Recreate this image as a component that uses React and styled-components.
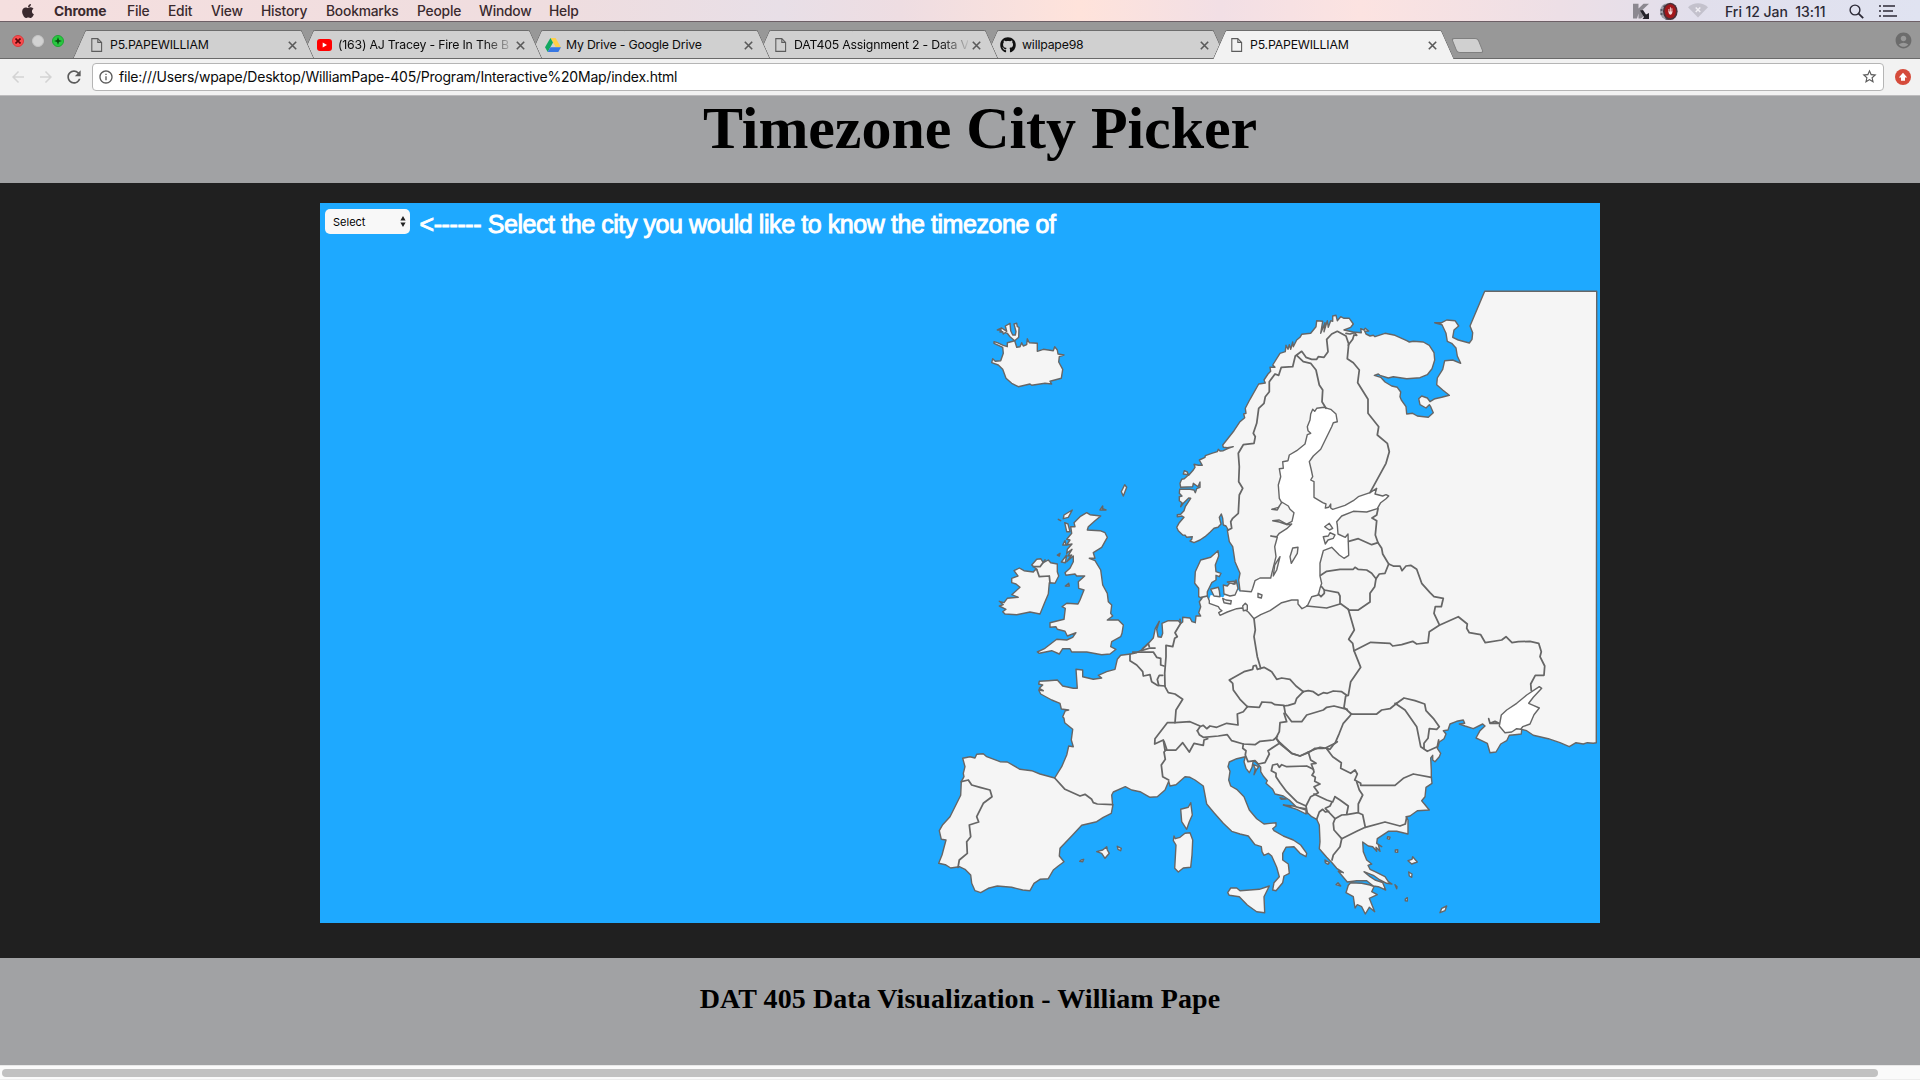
import React from "react";
import styled, { createGlobalStyle } from "styled-components";
import { FaApple, FaGithub } from "react-icons/fa";
import {
  MdAccountCircle,
  MdArrowBack,
  MdArrowForward,
  MdInfoOutline,
  MdRefresh,
  MdStarBorder,
} from "react-icons/md";

const GlobalStyle = createGlobalStyle`
  * { box-sizing: border-box; }
  html, body { margin: 0; padding: 0; overflow: hidden; }
  svg { display: block; flex: none; }
`;

const Screen = styled.div`
  width: 1920px;
  height: 1080px;
  display: flex;
  flex-direction: column;
  overflow: hidden;
  background: #a1a2a4;
  font-family: Inter, Roboto, "Liberation Sans", sans-serif;
`;

/* ---------- menu bar ---------- */

const MenuBar = styled.header`
  height: 22px;
  flex: none;
  display: flex;
  align-items: center;
  justify-content: space-between;
  padding: 1px 23px 0 20px;
  border-bottom: 1px solid #6d5f66;
  background: linear-gradient(90deg, #f5dfdf 0, #efdddf 560px, #e8dfe7 780px, #eedde2 900px,
    #ffe3db 1080px, #f2dfe5 1220px, #fce3e1 1360px, #eddfe6 1560px, #e1dfec 1700px, #e0e3f1 1920px);
  color: #3a2a2e;
`;

const MenuGroup = styled.nav`
  display: flex;
  align-items: center;
`;

const MenuItem = styled.span`
  width: ${(p) => p.$w}px;
  font-size: 13.8px;
  line-height: 21px;
  font-weight: ${(p) => (p.$bold ? 700 : 500)};
  letter-spacing: -0.2px;
  white-space: nowrap;
`;

const StatusGroup = styled.div`
  display: flex;
  align-items: center;
  color: #2c2a36;
`;

const Clock = styled.span`
  width: 125px;
  margin-left: 16px;
  padding-left: 1px;
  font-size: 14px;
  line-height: 21px;
  font-weight: 500;
  letter-spacing: -0.05px;
  white-space: pre;
`;

const StatusGap = styled.span`
  width: 15px;
`;

/* ---------- tab strip ---------- */

const TabStrip = styled.div`
  height: 37px;
  flex: none;
  display: flex;
  align-items: flex-end;
  padding-left: 14px;
  background: #989898;
  border-bottom: 1px solid #6a6a6a;
`;

const Lights = styled.div`
  display: flex;
  align-items: center;
  gap: 8px;
  height: 36px;
  width: 58.5px;
  padding-top: 1px;
  margin-left: -2px;
  margin-right: 2px;
`;

const Light = styled.span`
  width: 12px;
  height: 12px;
  border-radius: 50%;
  display: grid;
  place-items: center;
  background: ${(p) => p.$bg};
  border: 0.5px solid ${(p) => p.$edge};
`;

const TabBox = styled.div`
  position: relative;
  z-index: ${(p) => p.$z};
  width: 241.5px;
  height: ${(p) => (p.$active ? 29 : 28)}px;
  margin-right: -13.5px;
  margin-bottom: ${(p) => (p.$active ? -1 : 0)}px;
  padding: ${(p) => (p.$active ? 1 : 2)}px 17px 0 18px;
  display: flex;
  align-items: center;
  &::before,
  &::after {
    content: "";
    position: absolute;
    z-index: -1;
    top: 0;
    bottom: 0;
    width: 55%;
    background: ${(p) => (p.$active ? "#f2f2f2" : "#d0d0d0")};
    border-top: 1px solid #6d6d6d;
  }
  &::before {
    left: 6px;
    transform: skewX(-24deg);
    border-left: 1px solid #6d6d6d;
    border-top-left-radius: 2px;
  }
  &::after {
    right: 6px;
    transform: skewX(24deg);
    border-right: 1px solid #6d6d6d;
    border-top-right-radius: 2px;
  }
`;

const Favicon = styled.span`
  width: 19.5px;
  display: flex;
  margin-left: ${(p) => p.$shift || 0}px;
  margin-right: ${(p) => -(p.$shift || 0)}px;
`;

const TabTitle = styled.span`
  flex: 1;
  min-width: 0;
  white-space: nowrap;
  font-size: 12.3px;
  line-height: 18px;
  letter-spacing: -0.2px;
  color: #0c0c0c;
  margin-right: 4px;
  ${(p) => p.$fade && "mask-image: linear-gradient(90deg, #000 84%, rgba(0, 0, 0, 0.1) 100%);"}
`;

const NewTab = styled.span`
  width: 27px;
  height: 15px;
  margin: 0 0 5px 13.5px;
  position: relative;
  z-index: 11;
  transform: skewX(22deg);
  border-radius: 3px;
  background: #d0d0d0;
  border: 1px solid #808080;
`;

const Profile = styled.span`
  margin-left: auto;
  margin-right: 7px;
  height: 36px;
  padding-top: 1px;
  display: flex;
  align-items: center;
  color: #6c6c6c;
`;

/* ---------- toolbar ---------- */

const Toolbar = styled.div`
  height: 37px;
  flex: none;
  display: flex;
  align-items: center;
  padding: 0 9px 1px 9px;
  background: #f2f2f2;
  border-bottom: 1px solid #bdbcbe;
`;

const NavButton = styled.span`
  display: flex;
  width: ${(p) => p.$w}px;
  color: ${(p) => (p.$off ? "#d3d3d3" : "#5b5b5b")};
`;

const AddressBar = styled.div`
  width: 1792px;
  height: 28px;
  display: flex;
  align-items: center;
  padding: 0 5px;
  border: 1px solid #b5b5b5;
  border-radius: 4px;
  background: #fff;
  color: #5b5b5b;
`;

const Url = styled.span`
  flex: 1;
  padding-left: 5px;
  font-size: 14px;
  letter-spacing: -0.22px;
  color: #0a0a0a;
  white-space: nowrap;
`;

const Extension = styled.span`
  margin-left: auto;
  display: flex;
`;

/* ---------- page ---------- */

const PageHeader = styled.div`
  height: 87px;
  flex: none;
  display: flex;
  justify-content: center;
  padding-left: 40px;
  background: #a1a2a4;
`;

const Title = styled.h1`
  margin: 0;
  font: bold 60px/64px "Liberation Serif", "Times New Roman", serif;
  letter-spacing: -0.06px;
  color: #000;
  white-space: nowrap;
`;

const Stage = styled.main`
  height: 775px;
  flex: none;
  display: flex;
  justify-content: center;
  padding-top: 20px;
  background: #202020;
`;

const Canvas = styled.section`
  position: relative;
  width: 1280px;
  height: 720px;
  background: #1ea9ff;
`;

const MapDrawing = styled.svg`
  width: 1280px;
  height: 720px;
`;

const Controls = styled.div`
  position: absolute;
  left: 5px;
  top: 5px;
  display: flex;
  align-items: flex-start;
`;

const CitySelect = styled.div`
  width: 85px;
  height: 25px;
  margin-top: 1px;
  padding: 0 4px 0 8px;
  display: flex;
  align-items: center;
  justify-content: space-between;
  border-radius: 5px;
  background: #f8f8f8;
  font-size: 11px;
  color: #000;
`;

const Prompt = styled.span`
  margin-left: 9.5px;
  font: 25px/33px "Liberation Sans", Arial, sans-serif;
  letter-spacing: -0.42px;
  -webkit-text-stroke: 0.9px #fff;
  color: #fff;
  white-space: nowrap;
`;

const PageFooter = styled.footer`
  height: 107px;
  flex: none;
  padding-top: 24px;
  text-align: center;
  background: #a1a2a4;
  font: bold 28px/34px "Liberation Serif", "Times New Roman", serif;
  letter-spacing: 0.07px;
  color: #000;
`;

const ScrollTrack = styled.div`
  height: 15px;
  flex: none;
  padding: 3px 2px;
  background: #fafafa;
  border-top: 1px solid #e8e8e8;
  border-bottom: 1px solid #ededed;
`;

const ScrollThumb = styled.div`
  width: 1876px;
  height: 8px;
  border-radius: 4px;
  background: #c1c1c1;
`;

/* ---------- map data: each sheet is drawn at three units per pixel ---------- */

const sheet = (ox, oy) => (text) =>
  text
    .trim()
    .split(/\s+/)
    .map((pair) => {
      const [x, y] = pair.split(",").map(Number);
      return `${(ox + x / 3).toFixed(1)},${(oy + y / 3).toFixed(1)}`;
    })
    .join(" ");

const west = sheet(920, 300);
const north = sheet(1140, 280);
const centre = sheet(1140, 540);
const east = sheet(1300, 580);
const south = sheet(1140, 730);
const iberia = sheet(920, 640);

const baltic = north(
  "540,370 600,380 600,640 700,600 740,640 750,650 740,700 640,900 560,1000 330,1015 240,1010 205,965 212,945 250,952 262,932 290,925 300,935 340,880 350,700 400,500"
);

const mainland = [
  north(`265,750 258,738 250,735 248,715 244,702 238,712 243,732 234,742 222,745 210,757 195,770 180,780 162,788 150,783 155,778
    157,770 140,772 136,766 128,765 115,752 110,742 118,728 132,712 126,708 112,710 112,704 122,703 132,692 136,680 152,655 146,654
    130,670 122,680 126,668 118,662 118,650 126,648 118,640 119,628 150,628 162,630 166,638 170,626 180,622 180,606 174,620 160,610 158,620 122,622 120,610 125,598
    133,596 146,584 130,582 133,572 142,576 146,586 160,570 165,562 162,553 175,556 187,556 178,540 195,532 196,527 215,520 232,515 235,508 240,513 250,512
    265,505 280,500 262,503 250,502 248,495 262,478 282,452 300,425 314,413 311,402 318,400 316,385 330,358 356,312 376,309 372,300 384,282 392,274 390,262 405,262
    398,255 420,220 436,215 438,196 444,208 448,194 452,208 458,186 460,200 470,180 480,172 485,163 512,160 528,140 530,122 548,124 542,160 555,128 552,155
    562,122 565,142 572,122 578,124 578,108 588,106 592,122 602,110 612,115 628,115 640,132 632,142 612,150 640,156 664,158 662,146 672,150 676,145 686,153 674,154 678,162 690,168 700,166 705,170 735,160 765,166 800,182
    808,186 820,184 850,186 868,196 882,218 884,240 876,266 862,284 840,293 800,296 760,290 745,294 720,286 715,282 703,286 722,292 735,306 755,318
    772,322 782,336 780,350 784,360 798,380 800,402 818,400 832,408 865,412 880,398 872,380 868,374 858,384 840,374 836,356 845,348 862,354 870,365 885,356
    905,352 928,346 908,330 890,314 892,294 908,268 914,242 938,240 962,250 952,228 948,204 935,190 922,184 918,160 906,134 884,128
    905,128 920,120 945,122 956,138 942,150 938,172 955,180 988,189 996,178 998,158 990,138 1034,34 1370,34`),
  east(`889,488 880,490 862,488 850,492 828,488 808,500 780,488 745,476 700,466 680,452 665,448 664,462 645,464 628,466 620,482 602,492
    588,516 570,518 562,490 545,482 528,474 540,452 555,438 548,432 520,446 495,438 478,432 494,430 490,420 470,424 450,432 444,450
    430,452 438,462 432,476 418,486 412,505 422,520 418,530 405,545 398,540 398,526 392,534 394,570`),
  south(`874,140 876,160 858,172 855,200 845,212 868,240 832,242 810,258 798,260 804,270 804,312 770,304 745,304 712,326
    710,340 725,350 715,344 720,364 708,352 710,364 698,350 685,348 668,336 670,365 680,390 695,402 684,406 690,418 705,425 735,440 745,455 756,462 740,460
    720,450 700,436 672,425 690,440 705,450 728,458 737,480 715,470 700,468 680,452 650,452 622,456 610,442 595,424 610,428 590,415 576,398 560,382
    538,356 540,335 538,285 530,268 515,260 500,246 498,236 470,232 448,210 430,198 405,192 398,178 378,160 382,152 370,138 362,125 362,112 350,98
    340,92 336,112 328,128 318,115 312,95 316,80 290,86 268,96 264,110 270,124 266,150 272,168 290,178 312,200 328,240 350,266 372,282
    408,278 408,288 398,296 402,302 430,318 460,330 482,345 500,370 498,380 480,370 462,350 438,352 428,370 428,390 445,402 448,430 432,438
    428,458 408,482 398,480 402,458 418,440 410,412 395,378 385,370 372,376 366,365 364,350 345,344 325,318 300,312 275,304 250,280
    222,248 200,222 190,168 165,150 150,142 135,140 108,164 90,168`),
  iberia(`746,424 735,450 712,470 690,472 660,455 635,450 616,440 580,456 575,465 578,498 574,520 550,532 530,545 485,556 455,588 420,625 418,648
    432,665 415,678 400,690 385,716 360,718 342,730 330,752 308,750 275,742 232,738 205,745 182,758 165,752 155,730 152,705 135,688
    118,680 92,684 76,674 56,670 66,645 78,600 64,598 58,572 68,554 90,530 122,466 124,425 132,410 130,400 135,380 128,355 150,350 165,354
    170,343 190,341 200,350 240,365 262,366 300,388 335,392 360,402 404,414 425,380 440,345 446,318 460,320 454,300 458,268 434,248 432,235 428,230 436,212
    446,210 424,207 420,190 395,180 362,162 356,150 370,152 358,145 368,135 356,132 358,124 385,122 412,120 428,138 460,145 472,145 468,88 488,90
    488,110 520,118 545,114 535,106 560,95 585,88 592,58 602,46 632,42 650,38`),
  west(`664,1050 680,1036 700,1014 706,985 718,964 710,988 714,1010 724,1012 728,1000 726,970 745,962 775,962 782,970
    788,966 788,952 810,954 816,965 826,968 828,948 842,948 836,938 842,920 838,905 846,895 836,890 836,865 824,850 826,815 842,780 872,772 894,752 896,768 886,795
    888,815 903,820 898,830 888,826 888,840 875,848 862,875 862,888`),
  centre(`208,182 208,190 235,200 240,208 246,212 236,218 240,226 262,216 290,206 306,204 325,216 342,236 362,224
    390,212 425,188 455,180 474,180 474,192 486,206 502,198 515,170 535,165 540,145 545,130 540,108 540,70 550,32 575,22 598,45 612,55 626,46`),
  north(`624,762 616,772 594,762 592,735 590,725 605,708 640,694 680,696 712,686 722,668 738,656 746,648 738,644 728,648 705,642 710,625 690,638
    655,650 640,662 615,676 578,688 572,684 572,672 566,682 556,684 558,672 548,668 522,652 522,605 512,600 518,590 514,570 508,545 520,528 542,508 575,440 580,428 592,425 588,402 572,388
    552,382 530,385 524,394 518,388 512,402 510,420 502,440 504,452 512,460 502,464 495,492 470,512 448,525 444,542 428,545 430,565 418,566 422,590 415,615 418,655 425,668
    415,682 395,688 412,690 425,666 445,678 450,688 462,698 456,724 440,732 418,720 398,722 418,726 440,734 455,732 440,746 418,760
    410,770 392,768 412,772 404,800 408,830 400,862 392,894 360,894 345,902 338,925 334,935 300,932 296,900 300,880 285,845 278,800 268,785 262,750`),
].join(" ");

const azov = east(
  "725,325 700,352 686,370 700,376 718,384 702,404 690,432 668,440 662,448 650,446 635,456 615,458 598,438 604,405 620,390 650,370 680,345 718,320"
);

const islands = [
  // Iceland
  west(`222,125 232,128 250,136 262,140 262,128 284,122 270,110 262,100 256,98 250,102 248,95 240,96 244,90 232,90 245,84 260,94 256,78 270,70 272,92 278,105 286,105 288,95 282,72 290,70 292,80 297,82 296,112 284,122
    290,142 300,140 305,128 310,138 320,134 322,116 328,128 352,130 352,154 370,148 400,152 404,140 412,150 414,162 432,165 418,170 416,186 428,208 424,235 390,244 395,252
    375,250 335,256 330,252 295,260 275,250 258,235 248,208 235,195 215,188 218,176 226,184 242,182 250,160 248,142 222,130`),
  // Great Britain
  west(`352,1056 375,1045 410,1018 440,1020 458,1012 468,998 442,1008 435,994 412,988 408,980 390,982 390,968 432,958 436,925 426,920 440,910 474,912 480,900 492,870 476,865
    475,845 494,828 470,828 465,822 438,826 435,818 450,805 460,785 460,768 440,785 455,765 444,768 456,748 440,760 442,748 456,732 440,735 450,720 440,718 455,700 452,680 465,680 462,668 480,650 500,638 510,644 542,648 525,662 505,680 502,690 540,692
    555,698 562,712 545,742 520,758 525,775 508,775 525,782 542,810 548,855 562,880 565,905 575,915 572,940 578,948 562,960 595,960 610,975 606,1000 602,1010
    575,1025 572,1040 588,1048 570,1062 545,1064 500,1056 455,1056 450,1046 428,1046 418,1062 395,1052 358,1060`),
  // Ireland
  west(`238,904 252,908 262,895 295,892 275,884 300,862 288,852 275,848 275,835 294,828 282,812 298,804 312,812 340,816 345,810 350,808 335,795 350,778 362,776 370,788 385,780 392,788
    412,792 412,815 416,828 405,850 388,848 385,882 375,905 360,942 330,936 290,944 255,942 248,935 258,928 238,918 250,914`),
  west("432,645 457,630 445,652 430,656"),
  west("434,668 444,672 450,695 440,695"),
  west("415,658 422,662"),
  west("540,630 548,618 548,626 558,630"),
  west("604,575 614,554 620,562 610,588"),
  west("436,858 446,850 448,858"),
  west("428,735 435,722 438,735"),
  west("412,765 420,760 418,768"),
  west("424,786 440,765 436,788"),
  // Baltic islands
  north("450,830 458,804 474,802 472,820 454,850"),
  north("400,888 404,855 420,830 410,870"),
  north("554,740 568,730 578,745 568,750"),
  north("550,770 565,768 570,758 585,765 580,775 564,780 556,792"),
  north("354,940 366,945 364,954 354,952"),
  north("308,978 316,970 322,976 322,990 310,992"),
  north("212,928 235,922 238,932 240,950 222,948"),
  north("250,915 262,918 270,908 285,912 288,900 294,925 285,945 270,948 252,942"),
  north("248,955 258,960 274,962 272,972 252,968"),
  north("262,906 284,904 282,912"),
  // Mediterranean
  south("152,218 157,255 148,275 140,298 125,275 122,238 145,232"),
  south("135,310 150,308 158,330 156,375 152,412 130,414 115,426 104,415 108,345 100,332 102,318 106,326 120,322"),
  south("263,488 272,474 290,474 300,482 358,478 388,468 372,500 374,548 350,545 322,525 298,500 268,496"),
  south("625,466 632,458 665,460 690,465 702,470 695,485 712,494 688,505 704,545 688,532 676,552 665,530 652,524 645,534 640,500 618,488"),
  south("900,548 905,535 920,528 915,542"),
  south("743,320 750,322 748,328 742,326"),
  south("766,360 773,359 773,367 766,366"),
  south("804,392 816,388 818,380 832,396 815,402"),
  south("806,426 816,432 815,442 808,438"),
  south("765,464 771,470 770,476"),
  south("796,507 802,503 802,513 796,512"),
  south("588,464 594,458 602,468"),
  south("555,390 568,398 564,403 556,398"),
  south("430,225 460,228 498,240 498,252 470,238"),
  south("420,203 438,207 424,208"),
  south("340,104 346,116 342,134 350,118 356,110"),
  iberia("530,635 548,630 560,620 562,630 568,640 555,655 545,640"),
  iberia("479,664 484,660 491,658 488,665"),
  iberia("592,619 604,625 602,632 594,628"),
];

const borders = [
  north(`265,750 275,745 272,725 278,715 295,700 298,645 308,625 296,605 298,560 295,520 310,494 342,490 346,470 340,460 350,430 356,385
    372,370 376,350 388,335 388,305 405,282 416,286 424,262 458,260 466,228 485,214 498,232 515,238 530,238 535,230 552,232 564,215 560,178 575,162 592,154 618,168 626,192 622,236 640,248
    658,270 653,308 684,358 684,400 716,440 712,465 742,490 748,515 738,550 690,638`),
  north("625,195 638,178 642,165 650,166 644,158 630,162 618,160"),
  north("470,226 490,245 512,250 528,270 538,315 548,330 546,365 558,385"),
  north("714,686 710,705 696,714 710,722 706,765 714,788 725,805 728,822 746,852 735,880 718,882 708,896 704,920 690,940 690,966 655,990 626,990"),
  north("626,784 655,776 695,794 714,788"),
  north("542,886 560,874 600,868 640,868 645,862 654,868 680,870 695,880 708,896"),
  north("746,852 760,858 780,858 786,872 798,858 812,856 830,868 845,910 870,938 882,950 910,955 904,980 886,980 882,1000 898,1034"),
  north("545,920 553,930 595,938 600,948 600,970 625,988"),
  north("500,978 560,984 600,972"),
  north("553,930 553,940 543,950 535,942"),
  east(`162,212 212,187 270,190 278,198 305,194 338,184 350,192 384,188 388,155 418,136 475,110 502,132 500,145 508,158 542,164 556,188
    605,180 618,170 636,188 655,185 690,184 716,190 724,215 720,230 734,258 732,286 706,286 692,312 694,332`),
  east("145,88 163,150 146,178 158,190 162,212 182,262 152,305 145,346 137,348 132,382 154,402"),
  centre("342,236 346,270 342,290 352,350 362,385"),
  centre("362,385 372,382 395,395 410,418 425,414 450,418 468,438 490,455"),
  centre("362,385 352,388 348,376 340,378 338,388 312,395 268,420 278,430 280,450 300,478 322,500"),
  centre("322,500 358,502 366,486 395,488 405,494 432,496"),
  centre("490,455 470,475 465,490 445,496 432,498"),
  centre("490,455 505,452 520,455 535,466 550,458 562,460 580,453 605,455 620,466"),
  centre("432,498 436,520 455,545 485,545 500,525 550,510 560,502 582,498 610,505 622,508"),
  east("154,402 230,402 245,390 270,386 290,370"),
  east("154,402 148,410 130,430 118,460 105,490 75,505"),
  centre("432,520 440,545 420,548 418,575 408,594"),
  centre("408,594 420,608 455,640 480,648 505,638 525,625 550,625"),
  centre("322,500 310,515 292,522 294,555 260,550 230,562 210,558 200,566 190,556 180,560 172,572"),
  centre("172,572 178,584 190,592 235,588 262,584 275,602 310,612 345,614 360,604 400,600 412,590"),
  centre("180,558 150,545 105,548 82,548 45,596 44,612 70,600 75,630 108,630 128,608 148,636 162,610 190,616 192,600 203,596"),
  centre("105,548 108,510 128,478 105,462 85,458 75,440 74,400 78,350 78,316 98,320 104,295 112,290 105,278 122,250 120,238"),
  centre("-22,336 40,336 50,352 62,355 62,375 72,378"),
  iberia("630,42 630,62 650,75 668,95 670,108 690,104 695,125 712,136 735,138"),
  iberia("716,136 712,118 718,106 728,106"),
  west("664,1052 690,1044 705,1044"),
  west("668,1046 685,1030 688,1040"),
  west("844,892 862,888"),
  iberia("732,304 740,328 732,336 736,358 724,375 728,410 746,420"),
  iberia("404,414 435,448 480,468 495,463 515,478 520,488 532,492 578,494"),
  iberia("124,425 145,420 155,435 180,442 210,450 216,470 190,490 170,530 176,546 148,555 152,590 140,605 142,640 118,660 114,682"),
  south("310,42 308,55 318,62 316,75 324,95 345,92 355,102 375,98 388,72 384,62 415,42"),
  south("408,24 418,40 455,70 480,78 505,66 540,52 555,54 570,58 582,42 592,35"),
  south(`498,228 470,215 440,185 420,158 408,140 408,130 394,122 398,105 412,102 418,112 425,104 440,110 500,108 520,118 522,126 516,136 526,142 524,154 540,162 522,170 535,188 512,200 498,228`),
  south("505,66 512,90 528,100 514,102 520,118"),
  south("560,56 578,80 604,98 602,115 632,130 645,120 652,132 644,150 662,160 662,166 765,166 790,145 820,132 874,142"),
  south("650,156 658,180 668,195 655,222 655,248 620,254 605,255 585,266 580,280 582,300 605,326 650,304 676,292 668,254 655,248"),
  south("585,200 600,210 625,228 620,252"),
  south("522,192 560,210 578,216 585,200"),
  south("575,218 570,228 556,235 566,246 585,266"),
  south("530,268 538,246 548,238 556,246 566,244"),
  south("498,228 502,250"),
  south("605,326 600,350 580,375 576,390"),
  south("676,292 735,276 780,288 796,282 800,262"),
  east("290,370 312,354 345,362 374,372 378,392 400,415 418,440 410,448 388,446 384,475 372,490 372,505"),
  east("285,370 315,390 350,440 362,500 382,514 412,500 416,480"),
  east("566,416 570,430 585,424 597,430 570,430"),
  west("340,800 360,800 375,780"),
  west("350,808 358,830 388,828 390,848"),
];

function EuropeMap() {
  return (
    <MapDrawing viewBox="320 203 1280 720">
      <polygon points={baltic} fill="#fff" />
      <g fill="#f5f5f5" stroke="#666" strokeWidth="1.4" strokeLinejoin="round">
        <polygon points={mainland} />
        {islands.map((points, i) => (
          <polygon key={i} points={points} />
        ))}
        <polygon points={azov} fill="#fff" />
      </g>
      <g fill="none" stroke="#666" strokeWidth="1.75" strokeLinejoin="round" strokeLinecap="round">
        {borders.map((points, i) => (
          <polyline key={i} points={points} />
        ))}
      </g>
    </MapDrawing>
  );
}

/* ---------- small drawings ---------- */

const PageIcon = () => (
  <svg width="12" height="14" viewBox="0 0 12 14" fill="none" stroke="#5c5c5c" strokeWidth="1.1">
    <path d="M0.8 0.6H6.8L10.6 4.4V13.4H0.8Z M6.8 0.6V4.4H10.6" />
  </svg>
);

const YoutubeIcon = () => (
  <svg width="15" height="12" viewBox="0 0 15 12">
    <rect width="15" height="12" rx="3" fill="#f00" />
    <path d="M5.7 3.4V8.6L10 6Z" fill="#fff" />
  </svg>
);

const DriveIcon = () => (
  <svg width="16" height="14" viewBox="0 0 16 14">
    <path d="M5.4 0H10.6L16 9.3H10.8Z" fill="#ffcf48" />
    <path d="M5.4 0L8 4.6L2.7 14L0 9.3Z" fill="#11a861" />
    <path d="M5.4 9.3H16L13.3 14H2.7Z" fill="#3777e3" />
  </svg>
);

const CloseIcon = () => (
  <svg width="9" height="9" viewBox="0 0 9 9" stroke="#5a5a5a" strokeWidth="1.6">
    <path d="M0.8 0.8L8.2 8.2M8.2 0.8L0.8 8.2" />
  </svg>
);

const StatusIcons = () => (
  <svg width="55" height="21" viewBox="0 0 55 21">
    <path d="M0 2.8H5.5V7.5L10.5 2.8H16L8.6 9.7L11.5 14.5L8 17.5H5.5V12.5L4 17.5H0Z" fill="#8c8890" />
    <path d="M7 9.5L10 9L13 13.5L16 12V18H9.5L11 16Z" fill="#25222a" />
    <ellipse cx="34" cy="10.5" rx="7" ry="8" fill="#9c9da6" />
    <path d="M27.5 9h2M27.5 13h2M30.5 5l2 1M32.5 18h4" stroke="#444552" strokeWidth="1.5" />
    <ellipse cx="37.3" cy="10.3" rx="7.3" ry="8.6" fill="#4b3038" />
    <ellipse cx="37.3" cy="10.3" rx="5.6" ry="7" fill="#a3171b" />
    <path d="M35.9 11V8M37.4 11V6.3M38.9 11V7.3" stroke="#f4dede" strokeWidth="0.9" />
    <path d="M35.4 10.5H39.4C39.6 14.5 35.6 15 35.4 10.5Z" fill="#f4dede" />
  </svg>
);

const WifiIcon = () => (
  <svg width="20" height="21" viewBox="0 0 20 21">
    <path d="M0 6.2C5.5 0.8 14.5 0.8 20 6.2L10 16.5Z" fill="#c3c1cc" />
    <path d="M7.7 6.5L12.3 11M12.3 6.5L7.7 11" stroke="#f0eef4" strokeWidth="1.5" />
  </svg>
);

const SearchIcon = () => (
  <svg width="15" height="15" viewBox="0 0 15 15" fill="none" stroke="#2c2a36" strokeWidth="1.4">
    <circle cx="6" cy="6" r="4.9" />
    <path d="M9.6 9.6L14.2 14.2" strokeWidth="1.8" />
  </svg>
);

const ListIcon = () => (
  <svg width="18" height="12" viewBox="0 0 18 12" stroke="#2c2a36" strokeWidth="1.7">
    <path d="M0 1H2M4 1H16M0 6H2M4 6H14M0 11H2M4 11H18" />
  </svg>
);

const StepArrows = () => (
  <svg width="6" height="11" viewBox="0 0 6 11">
    <path d="M3 0L5.6 4.4H0.4ZM3 11L5.6 6.6H0.4Z" fill="#222" />
  </svg>
);

const UploadIcon = () => (
  <svg width="16" height="16" viewBox="0 0 16 16">
    <circle cx="8" cy="8" r="8" fill="#d54b3b" />
    <path d="M8 3.8L12.2 8.4H10V11.8H6V8.4H3.8Z" fill="#fff" />
  </svg>
);

const menuItems = [
  ["Chrome", 73, true],
  ["File", 41],
  ["Edit", 43],
  ["View", 50],
  ["History", 65],
  ["Bookmarks", 91],
  ["People", 62],
  ["Window", 70],
  ["Help", 40],
];

const tabs = [
  { title: "P5.PAPEWILLIAM", icon: <PageIcon /> },
  { title: "(163) AJ Tracey - Fire In The B", icon: <YoutubeIcon />, shift: -2, fade: true },
  { title: "My Drive - Google Drive", icon: <DriveIcon />, shift: -2 },
  { title: "DAT405 Assignment 2 - Data V", icon: <PageIcon />, fade: true },
  { title: "willpape98", icon: <FaGithub size={16} color="#111" />, shift: -3 },
  { title: "P5.PAPEWILLIAM", icon: <PageIcon />, active: true },
];

export default function App() {
  return (
    <Screen>
      <GlobalStyle />
      <MenuBar>
        <MenuGroup>
          <MenuItem $w={34}>
            <FaApple size={16} />
          </MenuItem>
          {menuItems.map(([label, width, bold]) => (
            <MenuItem key={label} $w={width} $bold={bold}>
              {label}
            </MenuItem>
          ))}
        </MenuGroup>
        <StatusGroup>
          <StatusIcons />
          <WifiIcon />
          <Clock>{"Fri 12 Jan  13:11"}</Clock>
          <SearchIcon />
          <StatusGap />
          <ListIcon />
        </StatusGroup>
      </MenuBar>

      <TabStrip>
        <Lights>
          <Light $bg="#fb4b4d" $edge="#d8393b">
            <svg width="6" height="6" viewBox="0 0 6 6" stroke="#5b0608" strokeWidth="1.6">
              <path d="M0.5 0.5L5.5 5.5M5.5 0.5L0.5 5.5" />
            </svg>
          </Light>
          <Light $bg="#d2d2d2" $edge="#c4c4c4" />
          <Light $bg="#28c940" $edge="#1fa533">
            <svg width="8" height="8" viewBox="0 0 8 8" fill="#07500f">
              <path d="M4 0L5 3L8 4L5 5L4 8L3 5L0 4L3 3Z" />
            </svg>
          </Light>
        </Lights>
        {tabs.map((tab, i) => (
          <TabBox key={i} $active={tab.active} $z={tab.active ? 10 : 9 - i}>
            <Favicon $shift={tab.shift}>{tab.icon}</Favicon>
            <TabTitle $fade={tab.fade}>{tab.title}</TabTitle>
            <CloseIcon />
          </TabBox>
        ))}
        <NewTab />
        <Profile>
          <MdAccountCircle size={19} />
        </Profile>
      </TabStrip>

      <Toolbar>
        <NavButton $w={28} $off>
          <MdArrowBack size={18} />
        </NavButton>
        <NavButton $w={27} $off>
          <MdArrowForward size={18} />
        </NavButton>
        <NavButton $w={28}>
          <MdRefresh size={20} />
        </NavButton>
        <AddressBar>
          <MdInfoOutline size={16} />
          <Url>file:///Users/wpape/Desktop/WilliamPape-405/Program/Interactive%20Map/index.html</Url>
          <MdStarBorder size={17} />
        </AddressBar>
        <Extension>
          <UploadIcon />
        </Extension>
      </Toolbar>

      <PageHeader>
        <Title>Timezone City Picker</Title>
      </PageHeader>
      <Stage>
        <Canvas>
          <EuropeMap />
          <Controls>
            <CitySelect>
              Select
              <StepArrows />
            </CitySelect>
            <Prompt>{"<------ Select the city you would like to know the timezone of"}</Prompt>
          </Controls>
        </Canvas>
      </Stage>
      <PageFooter>DAT 405 Data Visualization - William Pape</PageFooter>
      <ScrollTrack>
        <ScrollThumb />
      </ScrollTrack>
    </Screen>
  );
}
